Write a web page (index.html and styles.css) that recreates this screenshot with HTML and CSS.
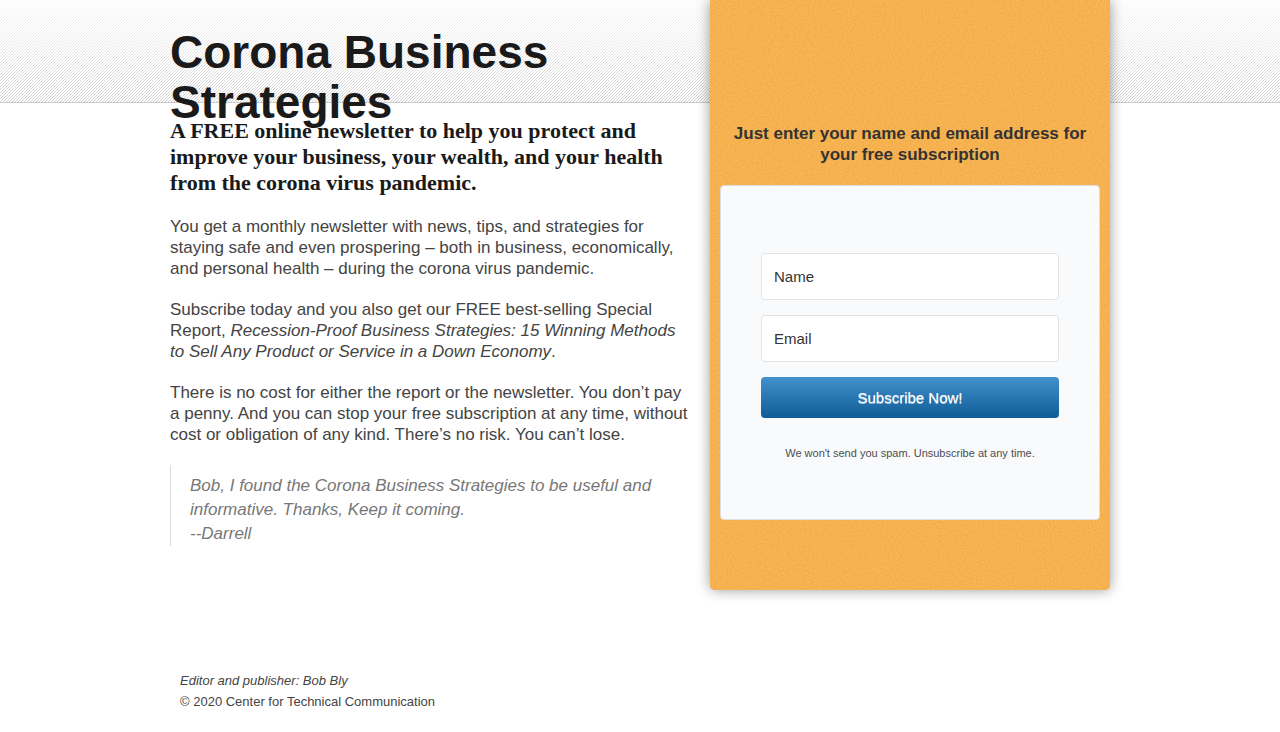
FILE: index.html
```html
<!DOCTYPE html>
<html lang="en">
<head>
<meta charset="utf-8">
<meta name="viewport" content="width=device-width, initial-scale=1">
<title>Corona Business Strategies</title>
<link rel="stylesheet" href="styles.css">
</head>
<body>
<header class="header">
  <svg class="texture" width="100%" height="100%" aria-hidden="true">
    <defs>
      <pattern id="stripes" width="3" height="3" patternUnits="userSpaceOnUse">
        <path fill="#d2d2d2" shape-rendering="crispEdges" d="M2 0h1v1H2zM1 1h1v1H1zM0 2h1v1H0z"/>
      </pattern>
      <linearGradient id="fade" x1="0" y1="0" x2="0" y2="1">
        <stop offset="0" stop-color="#fff" stop-opacity=".85"/>
        <stop offset="1" stop-color="#fff" stop-opacity="0"/>
      </linearGradient>
    </defs>
    <rect width="100%" height="100%" fill="url(#stripes)"/>
    <rect width="100%" height="100%" fill="url(#fade)"/>
  </svg>
  <div class="container header-inner">
    <h1 class="title">Corona Business Strategies</h1>
  </div>
</header>
<main class="container columns">
  <article class="content">
    <h2 class="lead">A FREE online newsletter to help you protect and improve your business, your wealth, and your health from the corona virus pandemic.</h2>
    <p class="text">You get a monthly newsletter with news, tips, and strategies for staying safe and even prospering – both in business, economically, and personal health – during the corona virus pandemic.</p>
    <p class="text">Subscribe today and you also get our FREE best-selling Special Report, <em>Recession-Proof Business Strategies: 15 Winning Methods to Sell Any Product or Service in a Down Economy</em>.</p>
    <p class="text">There is no cost for either the report or the newsletter. You don’t pay a penny. And you can stop your free subscription at any time, without cost or obligation of any kind. There’s no risk. You can’t lose.</p>
    <blockquote class="quote">Bob, I found the Corona Business Strategies to be useful and informative. Thanks, Keep it coming.<br>--Darrell</blockquote>
  </article>
  <aside class="panel">
    <svg class="texture" width="100%" height="100%" aria-hidden="true">
      <filter id="grain" x="0" y="0" width="100%" height="100%" color-interpolation-filters="sRGB">
        <feTurbulence type="fractalNoise" baseFrequency="0.6" numOctaves="2" seed="4"/>
        <feColorMatrix values="0.08 0 0 0 0.925  0.09 0 0 0 0.65  0.09 0 0 0 0.268  0 0 0 0 1"/>
      </filter>
      <rect width="100%" height="100%" filter="url(#grain)"/>
    </svg>
    <p class="panel-title">Just enter your name and email address for your free subscription</p>
    <form class="form">
      <input class="field" type="text" name="name" placeholder="Name" aria-label="Name">
      <input class="field" type="email" name="email" placeholder="Email" aria-label="Email">
      <button class="submit" type="submit">Subscribe Now!</button>
      <p class="note">We won't send you spam. Unsubscribe at any time.</p>
    </form>
  </aside>
</main>
<footer class="container footer">
  <p><em>Editor and publisher: Bob Bly</em></p>
  <p>© 2020 Center for Technical Communication</p>
</footer>
</body>
</html>
```
FILE: styles.css
```css
* { box-sizing: border-box; }
body {
  margin: 0;
  background: #fff;
  color: #444;
  font: 17px/21px "Liberation Sans", Arial, sans-serif;
}
p, h1, h2, blockquote { margin: 0; }
.container {
  width: 100%;
  max-width: 940px;
  margin: 0 auto;
}
.texture {
  position: absolute;
  top: 0;
  left: 0;
  z-index: -1;
}
.header {
  position: relative;
  z-index: 0;
  height: 103px;
  border-bottom: 1px solid #ccc;
}
.header-inner { padding-top: 27px; }
.title {
  max-width: 520px;
  color: #1a1a1a;
  font-size: 46px;
  line-height: 50px;
}
.columns {
  display: grid;
  grid-template-columns: minmax(0, 1fr) 400px;
  gap: 20px;
  align-items: start;
}
.content {
  display: flex;
  flex-direction: column;
  gap: 20px;
  padding-top: 15px;
}
.lead {
  color: #1a1a1a;
  font: bold 22px/26px "Liberation Serif", "Times New Roman", serif;
}
.quote {
  padding: 9px 0 0 19px;
  border-left: 1px solid #ddd;
  color: #777;
  font-style: italic;
  line-height: 24px;
}
.panel {
  position: relative;
  z-index: 1;
  margin-top: -103px;
  padding: 123px 10px 70px;
  overflow: hidden;
  border-radius: 0 0 5px 5px;
  background: #f7b24f;
  box-shadow: 0 0 14px rgba(0, 0, 0, .4);
}
.panel-title {
  margin-bottom: 20px;
  padding: 0 10px;
  color: #333;
  font-weight: bold;
  text-align: center;
}
.form {
  display: flex;
  flex-direction: column;
  gap: 15px;
  padding: 67px 40px 55px;
  border: 1px solid #ddd;
  border-radius: 4px;
  background: #f9fafc;
}
.field {
  width: 100%;
  height: 47px;
  padding: 0 12px;
  border: 1px solid #e3e3e3;
  border-radius: 4px;
  background: #fff;
  color: #333;
  font: 15px/21px "Liberation Sans", Arial, sans-serif;
}
.field::placeholder { color: #333; opacity: 1; }
.submit {
  height: 41px;
  border: 0;
  border-radius: 4px;
  background: linear-gradient(#4391cd, #0f5c96);
  color: #fff;
  font: 15px/21px "Liberation Sans", Arial, sans-serif;
  text-shadow: 0 1px 0 rgba(255, 255, 255, .6);
}
.note {
  padding-top: 10px;
  color: #4d4d4d;
  font-size: 11px;
  text-align: center;
}
.footer {
  padding: 80px 10px 20px;
  font-size: 13px;
}
```
